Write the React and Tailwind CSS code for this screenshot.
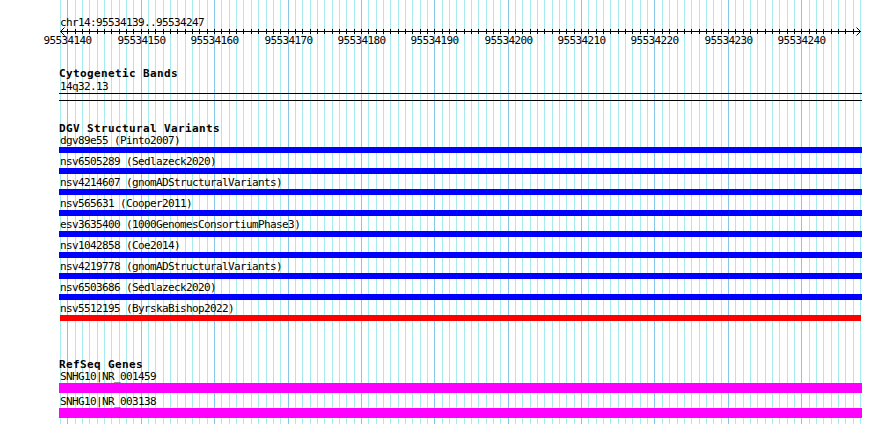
import React from 'react';

const START = 95534139;
const END = 95534247;
const LEFT = 60;
const SPAN = 800;
const BASES = END - START + 1;

const toX = (b) => Math.round(LEFT + ((b - START) * SPAN) / BASES) + 0.5;

const GRID = Array.from({ length: BASES + 1 }, (_, k) => ({
  x: toX(START + k),
  major: (START + k) % 10 === 0,
}));

const LABELS = Array.from({ length: 11 }, (_, i) => 95534140 + i * 10);

const VARIANTS = [
  { id: 'dgv89e55', study: 'Pinto2007', color: 'bg-[#0000ff]' },
  { id: 'nsv6505289', study: 'Sedlazeck2020', color: 'bg-[#0000ff]' },
  { id: 'nsv4214607', study: 'gnomADStructuralVariants', color: 'bg-[#0000ff]' },
  { id: 'nsv565631', study: 'Cooper2011', color: 'bg-[#0000ff]' },
  { id: 'esv3635400', study: '1000GenomesConsortiumPhase3', color: 'bg-[#0000ff]' },
  { id: 'nsv1042858', study: 'Coe2014', color: 'bg-[#0000ff]' },
  { id: 'nsv4219778', study: 'gnomADStructuralVariants', color: 'bg-[#0000ff]' },
  { id: 'nsv6503686', study: 'Sedlazeck2020', color: 'bg-[#0000ff]' },
  { id: 'nsv5512195', study: 'ByrskaBishop2022', color: 'bg-[#ff0000]', red: true },
];

const GENES = ['SNHG10|NR_001459', 'SNHG10|NR_003138'];

const mono = "font-['DejaVu_Sans_Mono',monospace] text-[11px] tracking-[-0.62px] text-black";
const bold = "font-['DejaVu_Sans_Mono',monospace] text-[11px] font-bold tracking-[0.38px] text-black";

function Grid() {
  return (
    <svg className="absolute inset-0" width="890" height="424">
      {GRID.map((l) => (
        <line
          key={l.x}
          x1={l.x}
          x2={l.x}
          y1={0}
          y2={424}
          stroke={l.major ? '#86c6ea' : '#a6ecee'}
          shapeRendering="crispEdges"
        />
      ))}
    </svg>
  );
}

function Ruler() {
  return (
    <svg width="890" height="21" className="block overflow-visible">
      <line x1={60} x2={861} y1={2.5} y2={2.5} stroke="#000" shapeRendering="crispEdges" />
      {GRID.slice(1, BASES).map((l) => (
        <line key={l.x} x1={l.x} x2={l.x} y1={0} y2={5} stroke="#000" shapeRendering="crispEdges" />
      ))}
      <polyline points="64.5,-1.5 60.5,2.5 64.5,6.5" fill="none" stroke="#000" />
      <polyline points="856.5,-1.5 860.5,2.5 856.5,6.5" fill="none" stroke="#000" />
      {LABELS.map((b) => (
        <text key={b} x={toX(b)} y={15} textAnchor="middle" className={mono} fill="#000">
          {b}
        </text>
      ))}
    </svg>
  );
}

export default function App() {
  return (
    <div className="relative w-[890px] h-[424px] bg-white overflow-hidden">
      <Grid />
      <div className="relative">
        <div className={`${mono} leading-[13px] pt-[16px] pl-[60px]`}>chr14:95534139..95534247</div>
        <Ruler />

        <div className={`${bold} leading-[13px] mt-[17px] pl-[59px]`}>Cytogenetic Bands</div>
        <div className={`${mono} leading-[13px] pl-[60px]`}>14q32.13</div>
        <div className="ml-[59px] w-[803px] h-[8px] border-y border-black" />

        <div className={`${bold} leading-[13px] mt-[21px] pl-[59px]`}>DGV Structural Variants</div>
        <div className="flex flex-col">
          {VARIANTS.map((v) => (
            <div key={v.id} className="h-[21px]">
              <div className={`${mono} leading-[12px] h-[12px] pl-[60px] whitespace-pre`}>
                {v.id} ({v.study})
              </div>
              <div
                className={`h-[6px] ${v.color} ${v.red ? 'ml-[60px] w-[801px]' : 'ml-[59px] w-[803px]'}`}
              />
            </div>
          ))}
        </div>

        <div className={`${bold} leading-[13px] mt-[34px] pl-[59px]`}>RefSeq Genes</div>
        <div className="flex flex-col">
          {GENES.map((g) => (
            <div key={g} className="h-[25px]">
              <div className={`${mono} leading-[12px] h-[12px] pl-[60px]`}>{g}</div>
              <div className="h-[10px] ml-[59px] w-[803px] bg-[#ff00ff]" />
            </div>
          ))}
        </div>
      </div>
    </div>
  );
}
